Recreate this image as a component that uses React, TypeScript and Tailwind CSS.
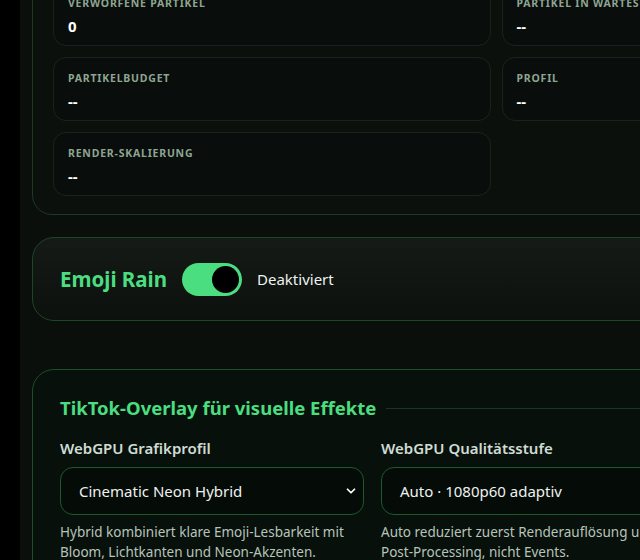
import { ChevronDown } from "lucide-react";

const font = { fontFamily: '"Noto Sans", "Open Sans", Arial, sans-serif' };

type Stat = { label: string; value: string };

const stats: Stat[] = [
  { label: "Verworfene Partikel", value: "0" },
  { label: "Partikel in Warteschlange", value: "--" },
  { label: "Partikelbudget", value: "--" },
  { label: "Profil", value: "--" },
  { label: "Render-Skalierung", value: "--" },
];

const StatCard = ({ label, value }: Stat) => (
  <div className="h-[64px] rounded-[13px] border border-[#1b221e] bg-[#090d0b] px-[14px] pt-[13px]">
    <div className="text-[10.5px] font-bold uppercase tracking-[0.075em] text-[#8ea592] leading-[14px] whitespace-nowrap">
      {label}
    </div>
    <div className="mt-[7px] text-[15px] font-bold text-white leading-[18px]">{value}</div>
  </div>
);

const Field = ({ label, value, hint }: { label: string; value: string; hint: string[] }) => (
  <div className="flex flex-col">
    <div className="text-[15px] font-semibold text-[#cfdcd2] leading-[20px]">{label}</div>
    <div className="mt-[9px] flex h-[48px] items-center justify-between rounded-[13px] border border-[#1d5a2b] bg-[#050b07] pl-[18px] pr-[5px]">
      <span className="text-[15px] text-[#eef2ef]">{value}</span>
      <ChevronDown size={14} strokeWidth={3} className="text-white" />
    </div>
    <div className="mt-[7px] text-[13.5px] leading-[20px] text-[#b7c4ba]">
      {hint.map((l) => (
        <div key={l} className="whitespace-nowrap">{l}</div>
      ))}
    </div>
  </div>
);

export default function App() {
  return (
    <div style={font} className="flex h-[560px] w-[640px] overflow-hidden bg-black">
      <div className="w-[20px] shrink-0 bg-black" />
      <main className="flex w-[1040px] shrink-0 flex-col bg-[#0a0f0b] pl-[12px]">
        {/* performance stats */}
        <section className="-mt-[39px] w-[928px] shrink-0 rounded-[20px] border border-[#1c3a24] bg-[#0b100d] px-[20px] pt-[20px] pb-[18px]">
          <div className="grid grid-cols-2 gap-[11px]">
            {stats.map((s) => (
              <StatCard key={s.label} {...s} />
            ))}
          </div>
        </section>

        {/* emoji rain toggle */}
        <section className="mt-[22px] flex h-[84px] w-[960px] shrink-0 items-center gap-[15px] rounded-[22px] border border-[#1d4528] bg-gradient-to-b from-[#151a17] to-[#0c110e] pl-[27px]">
          <h2 className="text-[20.5px] font-bold text-[#4ade80]">Emoji Rain</h2>
          <div className="flex h-[33px] w-[60px] items-center justify-end rounded-full bg-[#4ade80] pr-[3px]">
            <div className="h-[27px] w-[27px] rounded-full bg-black" />
          </div>
          <span className="text-[15px] text-[#eef2ef]">Deaktiviert</span>
        </section>

        {/* overlay settings */}
        <section className="mt-[48px] w-[1002px] shrink-0 rounded-[22px] border border-[#1d4d29] bg-[#08100b] px-[27px] pt-[25px] pb-[20px]">
          <div className="flex items-center gap-[10px]">
            <h2 className="whitespace-nowrap text-[18.5px] font-bold text-[#4ade80] leading-[26px]">
              TikTok-Overlay für visuelle Effekte
            </h2>
            <div className="h-px flex-1 bg-[#1b3322]" />
          </div>
          <div className="mt-[17px] grid grid-cols-3 gap-[17px]">
            <Field
              label="WebGPU Grafikprofil"
              value="Cinematic Neon Hybrid"
              hint={["Hybrid kombiniert klare Emoji-Lesbarkeit mit", "Bloom, Lichtkanten und Neon-Akzenten."]}
            />
            <Field
              label="WebGPU Qualitätsstufe"
              value="Auto · 1080p60 adaptiv"
              hint={["Auto reduziert zuerst Renderauflösung und", "Post-Processing, nicht Events."]}
            />
            <Field label="WebGPU Renderer" value="Automatisch" hint={["Wählt den besten Renderer."]} />
          </div>
        </section>
      </main>
    </div>
  );
}
